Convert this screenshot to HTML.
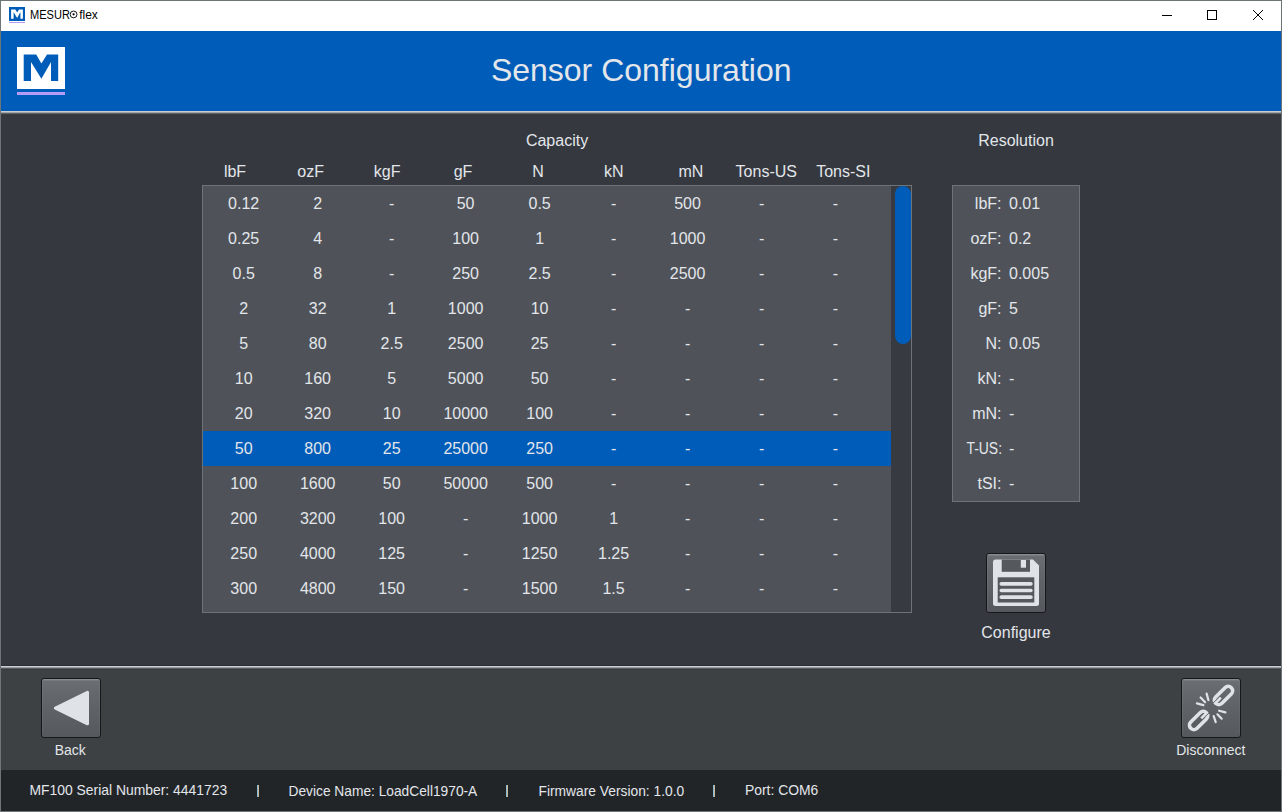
<!DOCTYPE html>
<html><head><meta charset="utf-8"><style>
html,body{margin:0;padding:0;width:1282px;height:812px;overflow:hidden;background:#35383f;}
body{position:relative;font-family:"Liberation Sans", sans-serif;}
</style></head><body>
<div style="position:absolute;left:0px;top:0px;width:1282px;height:812px;background:#6e7577;"></div><div style="position:absolute;left:1px;top:1px;width:1280px;height:30px;background:#ffffff;"></div><div style="position:absolute;left:1px;top:31px;width:1280px;height:80px;background:#005cb9;"></div><div style="position:absolute;left:1px;top:111px;width:1280px;height:1px;background:#cbcccd;"></div><div style="position:absolute;left:1px;top:112px;width:1280px;height:1px;background:#a0a4a7;"></div><div style="position:absolute;left:1px;top:113px;width:1280px;height:1px;background:#5c6063;"></div><div style="position:absolute;left:1px;top:114px;width:1280px;height:551px;background:#35383f;"></div><div style="position:absolute;left:1px;top:114px;width:1280px;height:1px;background:#383c3f;"></div><div style="position:absolute;left:1px;top:665px;width:1280px;height:1px;background:#2a2d34;"></div><div style="position:absolute;left:1px;top:666px;width:1280px;height:1px;background:#cdd0d4;"></div><div style="position:absolute;left:1px;top:667px;width:1280px;height:1px;background:#999da1;"></div><div style="position:absolute;left:1px;top:668px;width:1280px;height:1px;background:#585c5f;"></div><div style="position:absolute;left:1px;top:669px;width:1280px;height:101px;background:#3d4144;"></div><div style="position:absolute;left:1px;top:669px;width:1280px;height:1px;background:#383c3f;"></div><div style="position:absolute;left:1px;top:770px;width:1280px;height:41px;background:#222528;"></div><div style="position:absolute;left:29.80px;top:8.94px;font-size:12px;line-height:13.404px;color:#000000;white-space:nowrap;transform:scaleX(0.92);transform-origin:0 0;">MESUR</div><svg style="position:absolute;left:68px;top:9px" width="12" height="12" viewBox="0 0 12 12"><circle cx="5.6" cy="5.45" r="3.4" fill="none" stroke="#000" stroke-width="0.9"/><circle cx="5.6" cy="5.3" r="1.1" fill="#000"/></svg><div style="position:absolute;left:79.20px;top:8.94px;font-size:12px;line-height:13.404px;color:#000000;white-space:nowrap;">flex</div><div style="position:absolute;left:441.20px;top:53.04px;width:400px;text-align:center;font-size:32px;line-height:35.744px;color:#e3e6ea;white-space:nowrap;">Sensor Configuration</div><div style="position:absolute;left:202px;top:185px;width:710px;height:428px;background:#4f5359;border:1px solid #6f7277;box-sizing:border-box;"></div><div style="position:absolute;left:891px;top:186px;width:20px;height:426px;background:#373a40;"></div><div style="position:absolute;left:895px;top:186px;width:16px;height:158px;background:#005cb9;border-radius:8px;"></div><div style="position:absolute;left:357.00px;top:132.02px;width:400px;text-align:center;font-size:16px;line-height:17.872px;color:#e3e6ea;white-space:nowrap;">Capacity</div><div style="position:absolute;left:35.00px;top:162.52px;width:400px;text-align:center;font-size:16px;line-height:17.872px;color:#e3e6ea;white-space:nowrap;">lbF</div><div style="position:absolute;left:110.70px;top:162.52px;width:400px;text-align:center;font-size:16px;line-height:17.872px;color:#e3e6ea;white-space:nowrap;">ozF</div><div style="position:absolute;left:187.20px;top:162.52px;width:400px;text-align:center;font-size:16px;line-height:17.872px;color:#e3e6ea;white-space:nowrap;">kgF</div><div style="position:absolute;left:263.00px;top:162.52px;width:400px;text-align:center;font-size:16px;line-height:17.872px;color:#e3e6ea;white-space:nowrap;">gF</div><div style="position:absolute;left:338.00px;top:162.52px;width:400px;text-align:center;font-size:16px;line-height:17.872px;color:#e3e6ea;white-space:nowrap;">N</div><div style="position:absolute;left:413.80px;top:162.52px;width:400px;text-align:center;font-size:16px;line-height:17.872px;color:#e3e6ea;white-space:nowrap;">kN</div><div style="position:absolute;left:490.90px;top:162.52px;width:400px;text-align:center;font-size:16px;line-height:17.872px;color:#e3e6ea;white-space:nowrap;">mN</div><div style="position:absolute;left:566.30px;top:162.52px;width:400px;text-align:center;font-size:16px;line-height:17.872px;color:#e3e6ea;white-space:nowrap;">Tons-US</div><div style="position:absolute;left:643.30px;top:162.52px;width:400px;text-align:center;font-size:16px;line-height:17.872px;color:#e3e6ea;white-space:nowrap;">Tons-SI</div><div style="position:absolute;left:43.70px;top:194.52px;width:400px;text-align:center;font-size:16px;line-height:17.872px;color:#e3e6ea;white-space:nowrap;">0.12</div><div style="position:absolute;left:117.68px;top:194.52px;width:400px;text-align:center;font-size:16px;line-height:17.872px;color:#e3e6ea;white-space:nowrap;">2</div><div style="position:absolute;left:191.66px;top:194.52px;width:400px;text-align:center;font-size:16px;line-height:17.872px;color:#e3e6ea;white-space:nowrap;">-</div><div style="position:absolute;left:265.64px;top:194.52px;width:400px;text-align:center;font-size:16px;line-height:17.872px;color:#e3e6ea;white-space:nowrap;">50</div><div style="position:absolute;left:339.62px;top:194.52px;width:400px;text-align:center;font-size:16px;line-height:17.872px;color:#e3e6ea;white-space:nowrap;">0.5</div><div style="position:absolute;left:413.60px;top:194.52px;width:400px;text-align:center;font-size:16px;line-height:17.872px;color:#e3e6ea;white-space:nowrap;">-</div><div style="position:absolute;left:487.58px;top:194.52px;width:400px;text-align:center;font-size:16px;line-height:17.872px;color:#e3e6ea;white-space:nowrap;">500</div><div style="position:absolute;left:561.56px;top:194.52px;width:400px;text-align:center;font-size:16px;line-height:17.872px;color:#e3e6ea;white-space:nowrap;">-</div><div style="position:absolute;left:635.54px;top:194.52px;width:400px;text-align:center;font-size:16px;line-height:17.872px;color:#e3e6ea;white-space:nowrap;">-</div><div style="position:absolute;left:43.70px;top:229.52px;width:400px;text-align:center;font-size:16px;line-height:17.872px;color:#e3e6ea;white-space:nowrap;">0.25</div><div style="position:absolute;left:117.68px;top:229.52px;width:400px;text-align:center;font-size:16px;line-height:17.872px;color:#e3e6ea;white-space:nowrap;">4</div><div style="position:absolute;left:191.66px;top:229.52px;width:400px;text-align:center;font-size:16px;line-height:17.872px;color:#e3e6ea;white-space:nowrap;">-</div><div style="position:absolute;left:265.64px;top:229.52px;width:400px;text-align:center;font-size:16px;line-height:17.872px;color:#e3e6ea;white-space:nowrap;">100</div><div style="position:absolute;left:339.62px;top:229.52px;width:400px;text-align:center;font-size:16px;line-height:17.872px;color:#e3e6ea;white-space:nowrap;">1</div><div style="position:absolute;left:413.60px;top:229.52px;width:400px;text-align:center;font-size:16px;line-height:17.872px;color:#e3e6ea;white-space:nowrap;">-</div><div style="position:absolute;left:487.58px;top:229.52px;width:400px;text-align:center;font-size:16px;line-height:17.872px;color:#e3e6ea;white-space:nowrap;">1000</div><div style="position:absolute;left:561.56px;top:229.52px;width:400px;text-align:center;font-size:16px;line-height:17.872px;color:#e3e6ea;white-space:nowrap;">-</div><div style="position:absolute;left:635.54px;top:229.52px;width:400px;text-align:center;font-size:16px;line-height:17.872px;color:#e3e6ea;white-space:nowrap;">-</div><div style="position:absolute;left:43.70px;top:264.52px;width:400px;text-align:center;font-size:16px;line-height:17.872px;color:#e3e6ea;white-space:nowrap;">0.5</div><div style="position:absolute;left:117.68px;top:264.52px;width:400px;text-align:center;font-size:16px;line-height:17.872px;color:#e3e6ea;white-space:nowrap;">8</div><div style="position:absolute;left:191.66px;top:264.52px;width:400px;text-align:center;font-size:16px;line-height:17.872px;color:#e3e6ea;white-space:nowrap;">-</div><div style="position:absolute;left:265.64px;top:264.52px;width:400px;text-align:center;font-size:16px;line-height:17.872px;color:#e3e6ea;white-space:nowrap;">250</div><div style="position:absolute;left:339.62px;top:264.52px;width:400px;text-align:center;font-size:16px;line-height:17.872px;color:#e3e6ea;white-space:nowrap;">2.5</div><div style="position:absolute;left:413.60px;top:264.52px;width:400px;text-align:center;font-size:16px;line-height:17.872px;color:#e3e6ea;white-space:nowrap;">-</div><div style="position:absolute;left:487.58px;top:264.52px;width:400px;text-align:center;font-size:16px;line-height:17.872px;color:#e3e6ea;white-space:nowrap;">2500</div><div style="position:absolute;left:561.56px;top:264.52px;width:400px;text-align:center;font-size:16px;line-height:17.872px;color:#e3e6ea;white-space:nowrap;">-</div><div style="position:absolute;left:635.54px;top:264.52px;width:400px;text-align:center;font-size:16px;line-height:17.872px;color:#e3e6ea;white-space:nowrap;">-</div><div style="position:absolute;left:43.70px;top:299.52px;width:400px;text-align:center;font-size:16px;line-height:17.872px;color:#e3e6ea;white-space:nowrap;">2</div><div style="position:absolute;left:117.68px;top:299.52px;width:400px;text-align:center;font-size:16px;line-height:17.872px;color:#e3e6ea;white-space:nowrap;">32</div><div style="position:absolute;left:191.66px;top:299.52px;width:400px;text-align:center;font-size:16px;line-height:17.872px;color:#e3e6ea;white-space:nowrap;">1</div><div style="position:absolute;left:265.64px;top:299.52px;width:400px;text-align:center;font-size:16px;line-height:17.872px;color:#e3e6ea;white-space:nowrap;">1000</div><div style="position:absolute;left:339.62px;top:299.52px;width:400px;text-align:center;font-size:16px;line-height:17.872px;color:#e3e6ea;white-space:nowrap;">10</div><div style="position:absolute;left:413.60px;top:299.52px;width:400px;text-align:center;font-size:16px;line-height:17.872px;color:#e3e6ea;white-space:nowrap;">-</div><div style="position:absolute;left:487.58px;top:299.52px;width:400px;text-align:center;font-size:16px;line-height:17.872px;color:#e3e6ea;white-space:nowrap;">-</div><div style="position:absolute;left:561.56px;top:299.52px;width:400px;text-align:center;font-size:16px;line-height:17.872px;color:#e3e6ea;white-space:nowrap;">-</div><div style="position:absolute;left:635.54px;top:299.52px;width:400px;text-align:center;font-size:16px;line-height:17.872px;color:#e3e6ea;white-space:nowrap;">-</div><div style="position:absolute;left:43.70px;top:334.52px;width:400px;text-align:center;font-size:16px;line-height:17.872px;color:#e3e6ea;white-space:nowrap;">5</div><div style="position:absolute;left:117.68px;top:334.52px;width:400px;text-align:center;font-size:16px;line-height:17.872px;color:#e3e6ea;white-space:nowrap;">80</div><div style="position:absolute;left:191.66px;top:334.52px;width:400px;text-align:center;font-size:16px;line-height:17.872px;color:#e3e6ea;white-space:nowrap;">2.5</div><div style="position:absolute;left:265.64px;top:334.52px;width:400px;text-align:center;font-size:16px;line-height:17.872px;color:#e3e6ea;white-space:nowrap;">2500</div><div style="position:absolute;left:339.62px;top:334.52px;width:400px;text-align:center;font-size:16px;line-height:17.872px;color:#e3e6ea;white-space:nowrap;">25</div><div style="position:absolute;left:413.60px;top:334.52px;width:400px;text-align:center;font-size:16px;line-height:17.872px;color:#e3e6ea;white-space:nowrap;">-</div><div style="position:absolute;left:487.58px;top:334.52px;width:400px;text-align:center;font-size:16px;line-height:17.872px;color:#e3e6ea;white-space:nowrap;">-</div><div style="position:absolute;left:561.56px;top:334.52px;width:400px;text-align:center;font-size:16px;line-height:17.872px;color:#e3e6ea;white-space:nowrap;">-</div><div style="position:absolute;left:635.54px;top:334.52px;width:400px;text-align:center;font-size:16px;line-height:17.872px;color:#e3e6ea;white-space:nowrap;">-</div><div style="position:absolute;left:43.70px;top:369.52px;width:400px;text-align:center;font-size:16px;line-height:17.872px;color:#e3e6ea;white-space:nowrap;">10</div><div style="position:absolute;left:117.68px;top:369.52px;width:400px;text-align:center;font-size:16px;line-height:17.872px;color:#e3e6ea;white-space:nowrap;">160</div><div style="position:absolute;left:191.66px;top:369.52px;width:400px;text-align:center;font-size:16px;line-height:17.872px;color:#e3e6ea;white-space:nowrap;">5</div><div style="position:absolute;left:265.64px;top:369.52px;width:400px;text-align:center;font-size:16px;line-height:17.872px;color:#e3e6ea;white-space:nowrap;">5000</div><div style="position:absolute;left:339.62px;top:369.52px;width:400px;text-align:center;font-size:16px;line-height:17.872px;color:#e3e6ea;white-space:nowrap;">50</div><div style="position:absolute;left:413.60px;top:369.52px;width:400px;text-align:center;font-size:16px;line-height:17.872px;color:#e3e6ea;white-space:nowrap;">-</div><div style="position:absolute;left:487.58px;top:369.52px;width:400px;text-align:center;font-size:16px;line-height:17.872px;color:#e3e6ea;white-space:nowrap;">-</div><div style="position:absolute;left:561.56px;top:369.52px;width:400px;text-align:center;font-size:16px;line-height:17.872px;color:#e3e6ea;white-space:nowrap;">-</div><div style="position:absolute;left:635.54px;top:369.52px;width:400px;text-align:center;font-size:16px;line-height:17.872px;color:#e3e6ea;white-space:nowrap;">-</div><div style="position:absolute;left:43.70px;top:404.52px;width:400px;text-align:center;font-size:16px;line-height:17.872px;color:#e3e6ea;white-space:nowrap;">20</div><div style="position:absolute;left:117.68px;top:404.52px;width:400px;text-align:center;font-size:16px;line-height:17.872px;color:#e3e6ea;white-space:nowrap;">320</div><div style="position:absolute;left:191.66px;top:404.52px;width:400px;text-align:center;font-size:16px;line-height:17.872px;color:#e3e6ea;white-space:nowrap;">10</div><div style="position:absolute;left:265.64px;top:404.52px;width:400px;text-align:center;font-size:16px;line-height:17.872px;color:#e3e6ea;white-space:nowrap;">10000</div><div style="position:absolute;left:339.62px;top:404.52px;width:400px;text-align:center;font-size:16px;line-height:17.872px;color:#e3e6ea;white-space:nowrap;">100</div><div style="position:absolute;left:413.60px;top:404.52px;width:400px;text-align:center;font-size:16px;line-height:17.872px;color:#e3e6ea;white-space:nowrap;">-</div><div style="position:absolute;left:487.58px;top:404.52px;width:400px;text-align:center;font-size:16px;line-height:17.872px;color:#e3e6ea;white-space:nowrap;">-</div><div style="position:absolute;left:561.56px;top:404.52px;width:400px;text-align:center;font-size:16px;line-height:17.872px;color:#e3e6ea;white-space:nowrap;">-</div><div style="position:absolute;left:635.54px;top:404.52px;width:400px;text-align:center;font-size:16px;line-height:17.872px;color:#e3e6ea;white-space:nowrap;">-</div><div style="position:absolute;left:203px;top:431px;width:688px;height:35px;background:#005cb9;"></div><div style="position:absolute;left:43.70px;top:439.52px;width:400px;text-align:center;font-size:16px;line-height:17.872px;color:#e3e6ea;white-space:nowrap;">50</div><div style="position:absolute;left:117.68px;top:439.52px;width:400px;text-align:center;font-size:16px;line-height:17.872px;color:#e3e6ea;white-space:nowrap;">800</div><div style="position:absolute;left:191.66px;top:439.52px;width:400px;text-align:center;font-size:16px;line-height:17.872px;color:#e3e6ea;white-space:nowrap;">25</div><div style="position:absolute;left:265.64px;top:439.52px;width:400px;text-align:center;font-size:16px;line-height:17.872px;color:#e3e6ea;white-space:nowrap;">25000</div><div style="position:absolute;left:339.62px;top:439.52px;width:400px;text-align:center;font-size:16px;line-height:17.872px;color:#e3e6ea;white-space:nowrap;">250</div><div style="position:absolute;left:413.60px;top:439.52px;width:400px;text-align:center;font-size:16px;line-height:17.872px;color:#e3e6ea;white-space:nowrap;">-</div><div style="position:absolute;left:487.58px;top:439.52px;width:400px;text-align:center;font-size:16px;line-height:17.872px;color:#e3e6ea;white-space:nowrap;">-</div><div style="position:absolute;left:561.56px;top:439.52px;width:400px;text-align:center;font-size:16px;line-height:17.872px;color:#e3e6ea;white-space:nowrap;">-</div><div style="position:absolute;left:635.54px;top:439.52px;width:400px;text-align:center;font-size:16px;line-height:17.872px;color:#e3e6ea;white-space:nowrap;">-</div><div style="position:absolute;left:43.70px;top:474.52px;width:400px;text-align:center;font-size:16px;line-height:17.872px;color:#e3e6ea;white-space:nowrap;">100</div><div style="position:absolute;left:117.68px;top:474.52px;width:400px;text-align:center;font-size:16px;line-height:17.872px;color:#e3e6ea;white-space:nowrap;">1600</div><div style="position:absolute;left:191.66px;top:474.52px;width:400px;text-align:center;font-size:16px;line-height:17.872px;color:#e3e6ea;white-space:nowrap;">50</div><div style="position:absolute;left:265.64px;top:474.52px;width:400px;text-align:center;font-size:16px;line-height:17.872px;color:#e3e6ea;white-space:nowrap;">50000</div><div style="position:absolute;left:339.62px;top:474.52px;width:400px;text-align:center;font-size:16px;line-height:17.872px;color:#e3e6ea;white-space:nowrap;">500</div><div style="position:absolute;left:413.60px;top:474.52px;width:400px;text-align:center;font-size:16px;line-height:17.872px;color:#e3e6ea;white-space:nowrap;">-</div><div style="position:absolute;left:487.58px;top:474.52px;width:400px;text-align:center;font-size:16px;line-height:17.872px;color:#e3e6ea;white-space:nowrap;">-</div><div style="position:absolute;left:561.56px;top:474.52px;width:400px;text-align:center;font-size:16px;line-height:17.872px;color:#e3e6ea;white-space:nowrap;">-</div><div style="position:absolute;left:635.54px;top:474.52px;width:400px;text-align:center;font-size:16px;line-height:17.872px;color:#e3e6ea;white-space:nowrap;">-</div><div style="position:absolute;left:43.70px;top:509.52px;width:400px;text-align:center;font-size:16px;line-height:17.872px;color:#e3e6ea;white-space:nowrap;">200</div><div style="position:absolute;left:117.68px;top:509.52px;width:400px;text-align:center;font-size:16px;line-height:17.872px;color:#e3e6ea;white-space:nowrap;">3200</div><div style="position:absolute;left:191.66px;top:509.52px;width:400px;text-align:center;font-size:16px;line-height:17.872px;color:#e3e6ea;white-space:nowrap;">100</div><div style="position:absolute;left:265.64px;top:509.52px;width:400px;text-align:center;font-size:16px;line-height:17.872px;color:#e3e6ea;white-space:nowrap;">-</div><div style="position:absolute;left:339.62px;top:509.52px;width:400px;text-align:center;font-size:16px;line-height:17.872px;color:#e3e6ea;white-space:nowrap;">1000</div><div style="position:absolute;left:413.60px;top:509.52px;width:400px;text-align:center;font-size:16px;line-height:17.872px;color:#e3e6ea;white-space:nowrap;">1</div><div style="position:absolute;left:487.58px;top:509.52px;width:400px;text-align:center;font-size:16px;line-height:17.872px;color:#e3e6ea;white-space:nowrap;">-</div><div style="position:absolute;left:561.56px;top:509.52px;width:400px;text-align:center;font-size:16px;line-height:17.872px;color:#e3e6ea;white-space:nowrap;">-</div><div style="position:absolute;left:635.54px;top:509.52px;width:400px;text-align:center;font-size:16px;line-height:17.872px;color:#e3e6ea;white-space:nowrap;">-</div><div style="position:absolute;left:43.70px;top:544.52px;width:400px;text-align:center;font-size:16px;line-height:17.872px;color:#e3e6ea;white-space:nowrap;">250</div><div style="position:absolute;left:117.68px;top:544.52px;width:400px;text-align:center;font-size:16px;line-height:17.872px;color:#e3e6ea;white-space:nowrap;">4000</div><div style="position:absolute;left:191.66px;top:544.52px;width:400px;text-align:center;font-size:16px;line-height:17.872px;color:#e3e6ea;white-space:nowrap;">125</div><div style="position:absolute;left:265.64px;top:544.52px;width:400px;text-align:center;font-size:16px;line-height:17.872px;color:#e3e6ea;white-space:nowrap;">-</div><div style="position:absolute;left:339.62px;top:544.52px;width:400px;text-align:center;font-size:16px;line-height:17.872px;color:#e3e6ea;white-space:nowrap;">1250</div><div style="position:absolute;left:413.60px;top:544.52px;width:400px;text-align:center;font-size:16px;line-height:17.872px;color:#e3e6ea;white-space:nowrap;">1.25</div><div style="position:absolute;left:487.58px;top:544.52px;width:400px;text-align:center;font-size:16px;line-height:17.872px;color:#e3e6ea;white-space:nowrap;">-</div><div style="position:absolute;left:561.56px;top:544.52px;width:400px;text-align:center;font-size:16px;line-height:17.872px;color:#e3e6ea;white-space:nowrap;">-</div><div style="position:absolute;left:635.54px;top:544.52px;width:400px;text-align:center;font-size:16px;line-height:17.872px;color:#e3e6ea;white-space:nowrap;">-</div><div style="position:absolute;left:43.70px;top:579.52px;width:400px;text-align:center;font-size:16px;line-height:17.872px;color:#e3e6ea;white-space:nowrap;">300</div><div style="position:absolute;left:117.68px;top:579.52px;width:400px;text-align:center;font-size:16px;line-height:17.872px;color:#e3e6ea;white-space:nowrap;">4800</div><div style="position:absolute;left:191.66px;top:579.52px;width:400px;text-align:center;font-size:16px;line-height:17.872px;color:#e3e6ea;white-space:nowrap;">150</div><div style="position:absolute;left:265.64px;top:579.52px;width:400px;text-align:center;font-size:16px;line-height:17.872px;color:#e3e6ea;white-space:nowrap;">-</div><div style="position:absolute;left:339.62px;top:579.52px;width:400px;text-align:center;font-size:16px;line-height:17.872px;color:#e3e6ea;white-space:nowrap;">1500</div><div style="position:absolute;left:413.60px;top:579.52px;width:400px;text-align:center;font-size:16px;line-height:17.872px;color:#e3e6ea;white-space:nowrap;">1.5</div><div style="position:absolute;left:487.58px;top:579.52px;width:400px;text-align:center;font-size:16px;line-height:17.872px;color:#e3e6ea;white-space:nowrap;">-</div><div style="position:absolute;left:561.56px;top:579.52px;width:400px;text-align:center;font-size:16px;line-height:17.872px;color:#e3e6ea;white-space:nowrap;">-</div><div style="position:absolute;left:635.54px;top:579.52px;width:400px;text-align:center;font-size:16px;line-height:17.872px;color:#e3e6ea;white-space:nowrap;">-</div><div style="position:absolute;left:816.00px;top:132.02px;width:400px;text-align:center;font-size:16px;line-height:17.872px;color:#e3e6ea;white-space:nowrap;">Resolution</div><div style="position:absolute;left:952px;top:185px;width:128px;height:317px;background:#4f5359;border:1px solid #6f7277;box-sizing:border-box;"></div><div style="position:absolute;left:601.50px;top:194.52px;width:400px;text-align:right;font-size:16px;line-height:17.872px;color:#e3e6ea;white-space:nowrap;">lbF:</div><div style="position:absolute;left:1009.00px;top:194.52px;font-size:16px;line-height:17.872px;color:#e3e6ea;white-space:nowrap;">0.01</div><div style="position:absolute;left:601.50px;top:229.52px;width:400px;text-align:right;font-size:16px;line-height:17.872px;color:#e3e6ea;white-space:nowrap;">ozF:</div><div style="position:absolute;left:1009.00px;top:229.52px;font-size:16px;line-height:17.872px;color:#e3e6ea;white-space:nowrap;">0.2</div><div style="position:absolute;left:601.50px;top:264.52px;width:400px;text-align:right;font-size:16px;line-height:17.872px;color:#e3e6ea;white-space:nowrap;">kgF:</div><div style="position:absolute;left:1009.00px;top:264.52px;font-size:16px;line-height:17.872px;color:#e3e6ea;white-space:nowrap;">0.005</div><div style="position:absolute;left:601.50px;top:299.52px;width:400px;text-align:right;font-size:16px;line-height:17.872px;color:#e3e6ea;white-space:nowrap;">gF:</div><div style="position:absolute;left:1009.00px;top:299.52px;font-size:16px;line-height:17.872px;color:#e3e6ea;white-space:nowrap;">5</div><div style="position:absolute;left:601.50px;top:334.52px;width:400px;text-align:right;font-size:16px;line-height:17.872px;color:#e3e6ea;white-space:nowrap;">N:</div><div style="position:absolute;left:1009.00px;top:334.52px;font-size:16px;line-height:17.872px;color:#e3e6ea;white-space:nowrap;">0.05</div><div style="position:absolute;left:601.50px;top:369.52px;width:400px;text-align:right;font-size:16px;line-height:17.872px;color:#e3e6ea;white-space:nowrap;">kN:</div><div style="position:absolute;left:1009.00px;top:369.52px;font-size:16px;line-height:17.872px;color:#e3e6ea;white-space:nowrap;">-</div><div style="position:absolute;left:601.50px;top:404.52px;width:400px;text-align:right;font-size:16px;line-height:17.872px;color:#e3e6ea;white-space:nowrap;">mN:</div><div style="position:absolute;left:1009.00px;top:404.52px;font-size:16px;line-height:17.872px;color:#e3e6ea;white-space:nowrap;">-</div><div style="position:absolute;left:601.50px;top:439.52px;width:400px;text-align:right;font-size:16px;line-height:17.872px;color:#e3e6ea;white-space:nowrap;transform:scaleX(0.87);transform-origin:100% 0;">T-US:</div><div style="position:absolute;left:1009.00px;top:439.52px;font-size:16px;line-height:17.872px;color:#e3e6ea;white-space:nowrap;">-</div><div style="position:absolute;left:601.50px;top:474.52px;width:400px;text-align:right;font-size:16px;line-height:17.872px;color:#e3e6ea;white-space:nowrap;">tSI:</div><div style="position:absolute;left:1009.00px;top:474.52px;font-size:16px;line-height:17.872px;color:#e3e6ea;white-space:nowrap;">-</div><div style="position:absolute;left:986px;top:553px;width:60px;height:60px;background:linear-gradient(#8a9398 0px,#80878c 1px,#6a6e73 2px,#63676c 30%,#55595e 100%);border:1px solid #15171a;border-radius:3px;box-sizing:border-box;box-shadow:inset 1px 0 rgba(255,255,255,0.06),inset -1px 0 rgba(255,255,255,0.04);"></div><svg style="position:absolute;left:986px;top:553px" width="60" height="60" viewBox="0 0 60 60"><path d="M9.5 6.5 H47 L53 12.5 V50.5 Q53 53 50.5 53 H9.5 Q7 53 7 50.5 V9 Q7 6.5 9.5 6.5 Z" fill="#dfe2e6"/><rect x="15.7" y="6.5" width="28.3" height="12.3" fill="#55595e"/><rect x="34.8" y="7" width="5.2" height="7.7" fill="#dfe2e6"/><rect x="11.7" y="24.3" width="36.6" height="25.2" fill="#55595e"/><rect x="13.5" y="29" width="33.2" height="3.7" rx="1.8" fill="#dfe2e6"/><rect x="13.5" y="35.8" width="33.2" height="3.5" rx="1.7" fill="#dfe2e6"/><rect x="13.5" y="42.2" width="33.2" height="3.8" rx="1.8" fill="#dfe2e6"/></svg><div style="position:absolute;left:816.00px;top:623.52px;width:400px;text-align:center;font-size:16px;line-height:17.872px;color:#e3e6ea;white-space:nowrap;">Configure</div><div style="position:absolute;left:41px;top:678px;width:60px;height:60px;background:linear-gradient(#8a9398 0px,#80878c 1px,#6a6e73 2px,#63676c 30%,#55595e 100%);border:1px solid #15171a;border-radius:3px;box-sizing:border-box;box-shadow:inset 1px 0 rgba(255,255,255,0.06),inset -1px 0 rgba(255,255,255,0.04);"></div><svg style="position:absolute;left:41px;top:678px" width="60" height="60" viewBox="0 0 60 60"><path d="M14.4 30.05 L46.5 14.3 L46.5 45.8 Z" fill="#dfe2e6" stroke="#dfe2e6" stroke-width="3" stroke-linejoin="round"/></svg><div style="position:absolute;left:-129.80px;top:743.33px;width:400px;text-align:center;font-size:14px;line-height:15.638px;color:#e3e6ea;white-space:nowrap;">Back</div><div style="position:absolute;left:1181px;top:678px;width:60px;height:60px;background:linear-gradient(#8a9398 0px,#80878c 1px,#6a6e73 2px,#63676c 30%,#55595e 100%);border:1px solid #15171a;border-radius:3px;box-sizing:border-box;box-shadow:inset 1px 0 rgba(255,255,255,0.06),inset -1px 0 rgba(255,255,255,0.04);"></div><svg style="position:absolute;left:1181px;top:678px" width="60" height="60" viewBox="0 0 60 60"><g fill="none" stroke="#dfe2e6" stroke-linecap="round"><g transform="translate(42.5,17.5) rotate(-45)"><rect x="-11.05" y="-4.45" width="22.1" height="8.9" rx="4.45" stroke-width="3.6"/><line x1="-11.65" y1="-0.3" x2="-3.4" y2="-0.3" stroke-width="2.6" stroke-linecap="butt"/><line x1="-13.55" y1="-2.0" x2="-8.1" y2="-2.0" stroke="#5d6166" stroke-width="0.9" stroke-linecap="butt"/></g><g transform="translate(17.6,42.5) rotate(135)"><rect x="-11.05" y="-4.45" width="22.1" height="8.9" rx="4.45" stroke-width="3.6"/><line x1="-11.65" y1="-0.3" x2="-3.4" y2="-0.3" stroke-width="2.6" stroke-linecap="butt"/><line x1="-13.55" y1="-2.0" x2="-8.1" y2="-2.0" stroke="#5d6166" stroke-width="0.9" stroke-linecap="butt"/></g><g stroke-width="2.2"><line x1="15.9" y1="25.4" x2="22.4" y2="27.1"/><line x1="19.6" y1="19.5" x2="24.1" y2="24.3"/><line x1="25.6" y1="15.6" x2="27.4" y2="22.1"/><line x1="38.1" y1="32.7" x2="44.4" y2="34.4"/><line x1="36.4" y1="36.3" x2="40.7" y2="40.7"/><line x1="32.7" y1="38.1" x2="34.7" y2="44.1"/></g></g></svg><div style="position:absolute;left:1010.80px;top:743.33px;width:400px;text-align:center;font-size:14px;line-height:15.638px;color:#e3e6ea;white-space:nowrap;">Disconnect</div><svg style="position:absolute;left:1150px;top:0px" width="132" height="31" viewBox="0 0 132 31"><rect x="12" y="15" width="10" height="1" fill="#000"/><rect x="57.5" y="10.5" width="9" height="9" fill="none" stroke="#000" stroke-width="1"/><path d="M103 10 L113 20 M113 10 L103 20" stroke="#000" stroke-width="1"/></svg><svg style="position:absolute;left:17px;top:47px" width="48" height="48" viewBox="17 47 48 48.000" preserveAspectRatio="none"><rect x="17" y="47" width="48" height="42" fill="#fff"/><polygon points="23.7,54.4 36.2,54.4 41.4,63.5 47,54.4 58.2,54.4 58.2,81 51,81 51,62 41.4,78.8 31,62 31,81 23.7,81" fill="#005cb9"/><rect x="17" y="92.000" width="48" height="3.000" fill="#b69cf8"/></svg><svg style="position:absolute;left:9px;top:7px" width="16" height="16" viewBox="0 0 16 16"><rect x="0" y="0" width="16" height="14" fill="#005cb9"/><polygon points="2.10,2.40 6.38,2.40 8.15,5.58 10.07,2.40 13.90,2.40 13.90,11.70 11.44,11.70 11.44,5.06 8.15,10.93 4.60,5.06 4.60,11.70 2.10,11.70" fill="#fff"/><rect x="0" y="15" width="16" height="1" fill="#b69cf8"/></svg><div style="position:absolute;left:29.50px;top:783.42px;font-size:13.9px;line-height:15.526px;color:#e3e6ea;white-space:nowrap;">MF100 Serial Number: 4441723</div><div style="position:absolute;left:257px;top:785px;width:1px;height:12px;background:#86bcd8;"></div><div style="position:absolute;left:258px;top:785px;width:1px;height:12px;background:#cdb894;"></div><div style="position:absolute;left:288.50px;top:783.56px;font-size:13.75px;line-height:15.359px;color:#e3e6ea;white-space:nowrap;">Device Name: LoadCell1970-A</div><div style="position:absolute;left:506px;top:785px;width:1px;height:12px;background:#86bcd8;"></div><div style="position:absolute;left:507px;top:785px;width:1px;height:12px;background:#cdb894;"></div><div style="position:absolute;left:538.50px;top:783.51px;font-size:13.8px;line-height:15.415px;color:#e3e6ea;white-space:nowrap;">Firmware Version: 1.0.0</div><div style="position:absolute;left:713px;top:785px;width:1px;height:12px;background:#86bcd8;"></div><div style="position:absolute;left:714px;top:785px;width:1px;height:12px;background:#cdb894;"></div><div style="position:absolute;left:745.00px;top:783.42px;font-size:13.9px;line-height:15.526px;color:#e3e6ea;white-space:nowrap;">Port: COM6</div>
</body></html>
